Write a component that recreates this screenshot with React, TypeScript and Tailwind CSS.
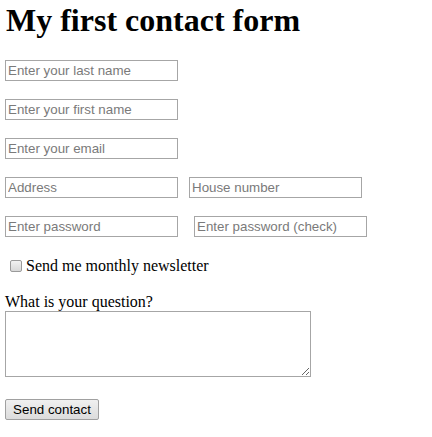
import React from "react";

const inputCls =
  "block w-[173px] h-[21px] border border-[#a6a6a6] bg-white px-[2px] text-[13.33px] leading-[17px] text-black placeholder:text-[#7a7a7a] outline-none font-['Liberation_Sans',Arial,sans-serif]";

export default function App() {
  return (
    <div className="w-[432px] h-[437px] bg-white text-black font-['Liberation_Serif','Times_New_Roman',serif] pl-[5px]">
      <h1 className="pt-[2px] pl-[1px] text-[32px] leading-[37px] font-bold">My first contact form</h1>
      <div className="mt-[21px] flex flex-col gap-[18px]">
        <input className={inputCls} placeholder="Enter your last name" />
        <input className={inputCls} placeholder="Enter your first name" />
        <input className={inputCls} placeholder="Enter your email" />
        <div className="flex gap-[11px]">
          <input className={inputCls} placeholder="Address" />
          <input className={inputCls} placeholder="House number" />
        </div>
        <div className="flex gap-[16px]">
          <input className={inputCls} placeholder="Enter password" type="password" />
          <input className={inputCls} placeholder="Enter password (check)" type="password" />
        </div>
      </div>
      <label className="mt-[20px] flex items-center h-[18px] text-[16px] leading-[18px]">
        <input
          type="checkbox"
          className="appearance-none ml-[5px] mr-[4px] w-[12px] h-[12px] rounded-[2px] border border-[#9a9a9a] bg-gradient-to-b from-[#f2f2f2] to-[#d8d8d8]"
        />
        <span>Send me monthly newsletter</span>
      </label>
      <div className="mt-[18px] text-[16px] leading-[18px]">What is your question?</div>
      <textarea className="block w-[306px] h-[66px] border border-[#a6a6a6] bg-white outline-none p-[2px] text-[13.33px]" />
      <button className="mt-[22px] block w-[94px] h-[21px] border border-[#a0a0a0] rounded-[2px] bg-gradient-to-b from-[#f0f0f0] to-[#dcdcdc] text-[13.33px] leading-[17px] text-black font-['Liberation_Sans',Arial,sans-serif]">
        Send contact
      </button>
    </div>
  );
}
